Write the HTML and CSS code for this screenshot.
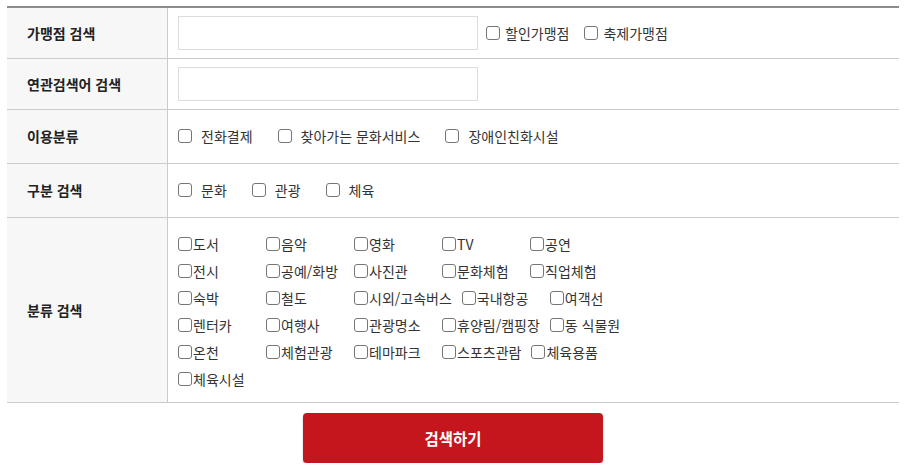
FILE: index.html
```html
<!DOCTYPE html>
<html lang="ko">
<head>
<meta charset="utf-8">
<title>검색</title>
<link rel="stylesheet" href="styles.css">
</head>
<body>
<div class="wrap">
  <div class="form">
    <div class="row r1">
      <div class="th">가맹점 검색</div>
      <div class="td">
        <input class="txt" type="text">
        <label class="opt first"><input type="checkbox"><span>할인가맹점</span></label>
        <label class="opt"><input type="checkbox"><span>축제가맹점</span></label>
      </div>
    </div>
    <div class="row r2">
      <div class="th">연관검색어 검색</div>
      <div class="td">
        <input class="txt" type="text">
      </div>
    </div>
    <div class="row r3">
      <div class="th">이용분류</div>
      <div class="td">
        <label class="chk"><input type="checkbox"><span>전화결제</span></label>
        <label class="chk"><input type="checkbox"><span>찾아가는 문화서비스</span></label>
        <label class="chk"><input type="checkbox"><span>장애인친화시설</span></label>
      </div>
    </div>
    <div class="row r4">
      <div class="th">구분 검색</div>
      <div class="td">
        <label class="chk"><input type="checkbox"><span>문화</span></label>
        <label class="chk"><input type="checkbox"><span>관광</span></label>
        <label class="chk"><input type="checkbox"><span>체육</span></label>
      </div>
    </div>
    <div class="row r5">
      <div class="th">분류 검색</div>
      <div class="td">
        <div class="line">
          <label class="item"><input type="checkbox"><span>도서</span></label>
          <label class="item"><input type="checkbox"><span>음악</span></label>
          <label class="item"><input type="checkbox"><span>영화</span></label>
          <label class="item"><input type="checkbox"><span>TV</span></label>
          <label class="item"><input type="checkbox"><span>공연</span></label>
        </div>
        <div class="line">
          <label class="item"><input type="checkbox"><span>전시</span></label>
          <label class="item"><input type="checkbox"><span>공예/화방</span></label>
          <label class="item"><input type="checkbox"><span>사진관</span></label>
          <label class="item"><input type="checkbox"><span>문화체험</span></label>
          <label class="item"><input type="checkbox"><span>직업체험</span></label>
        </div>
        <div class="line">
          <label class="item"><input type="checkbox"><span>숙박</span></label>
          <label class="item"><input type="checkbox"><span>철도</span></label>
          <label class="item"><input type="checkbox"><span>시외/고속버스</span></label>
          <label class="item"><input type="checkbox"><span>국내항공</span></label>
          <label class="item"><input type="checkbox"><span>여객선</span></label>
        </div>
        <div class="line">
          <label class="item"><input type="checkbox"><span>렌터카</span></label>
          <label class="item"><input type="checkbox"><span>여행사</span></label>
          <label class="item"><input type="checkbox"><span>관광명소</span></label>
          <label class="item"><input type="checkbox"><span>휴양림/캠핑장</span></label>
          <label class="item"><input type="checkbox"><span>동 식물원</span></label>
        </div>
        <div class="line">
          <label class="item"><input type="checkbox"><span>온천</span></label>
          <label class="item"><input type="checkbox"><span>체험관광</span></label>
          <label class="item"><input type="checkbox"><span>테마파크</span></label>
          <label class="item"><input type="checkbox"><span>스포츠관람</span></label>
          <label class="item"><input type="checkbox"><span>체육용품</span></label>
        </div>
        <div class="line">
          <label class="item"><input type="checkbox"><span>체육시설</span></label>
        </div>
      </div>
    </div>
  </div>
  <div class="btns">
    <button class="search" type="button">검색하기</button>
  </div>
</div>
</body>
</html>
```

FILE: styles.css
```css
html, body {
  margin: 0;
  padding: 0;
  background: #fff;
}
body {
  font-family: "Noto Sans CJK KR", "Noto Sans", sans-serif;
  font-size: 14px;
  color: #333;
}
.wrap {
  padding: 6px 7px 0;
}
.form {
  border-top: 2px solid #8c8c8c;
}
.row {
  display: grid;
  grid-template-columns: 161px 1fr;
  border-bottom: 1px solid #cbcbcb;
}
.th {
  box-sizing: border-box;
  background: #f7f7f7;
  border-right: 1px solid #cbcbcb;
  padding-left: 20px;
  padding-bottom: 1px;
  display: flex;
  align-items: center;
  font-weight: 700;
  color: #222;
  line-height: 20px;
}
.td {
  display: flex;
  align-items: center;
  padding: 8px 10px;
  line-height: 20px;
}
.txt {
  box-sizing: border-box;
  width: 300px;
  height: 34px;
  margin: 0;
  border: 1px solid #dcdcdc;
  padding: 0 8px;
  font: inherit;
}
input[type="checkbox"] {
  -webkit-appearance: none;
  appearance: none;
  box-sizing: border-box;
  margin: 0;
  width: 14px;
  height: 14px;
  flex: none;
  border: 1px solid #767676;
  border-radius: 3px;
  background: #fff;
}
.opt {
  display: flex;
  align-items: center;
  margin-left: 15px;
}
.opt.first {
  margin-left: 8px;
}
.opt span {
  margin-left: 5px;
}
.r3 .td {
  padding: 16px 10px 17px;
}
.r4 .td {
  padding: 16px 10px 17px;
}
.chk {
  display: flex;
  align-items: center;
  margin-right: 25px;
}
.chk span {
  margin-left: 9px;
}
.r5 .td {
  display: block;
  padding: 12px 10px 10px;
}
.line {
  display: flex;
  align-items: center;
  height: 27px;
}
.item {
  display: flex;
  align-items: center;
  min-width: 78px;
  margin-right: 10px;
  white-space: nowrap;
}
.item span {
  margin-left: 1px;
}
.btns {
  display: flex;
  justify-content: center;
  padding-top: 10px;
}
.search {
  width: 300px;
  height: 50px;
  border: 0;
  border-radius: 4px;
  background: #c4161c;
  color: #fff;
  font-family: "Noto Sans CJK KR", sans-serif;
  font-size: 15.5px;
  font-weight: 700;
  box-shadow: 0 2px 2px rgba(0, 0, 0, 0.25);
  cursor: pointer;
}
```
